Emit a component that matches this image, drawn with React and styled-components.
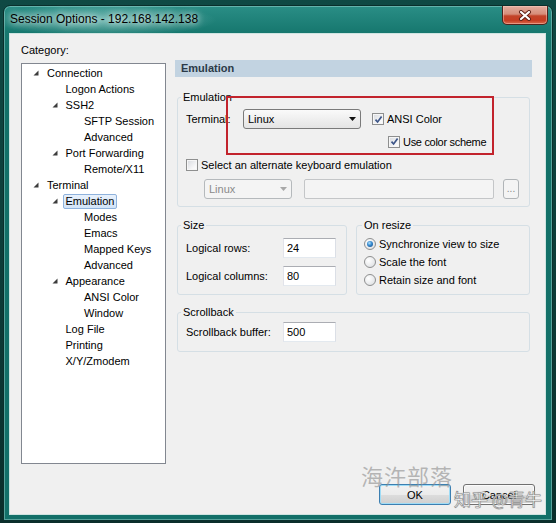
import React from "react";
import styled, { createGlobalStyle } from "styled-components";

const GlobalStyle = createGlobalStyle`
  html, body {
    margin: 0;
    padding: 0;
    background: #0f3f3b;
  }
  body {
    font-family: "Liberation Sans", Arial, sans-serif;
    font-size: 11px;
    color: #000;
  }
  * {
    box-sizing: border-box;
  }
`;

const tree = [
  { label: "Connection", level: 0, open: true },
  { label: "Logon Actions", level: 1 },
  { label: "SSH2", level: 1, open: true },
  { label: "SFTP Session", level: 2 },
  { label: "Advanced", level: 2 },
  { label: "Port Forwarding", level: 1, open: true },
  { label: "Remote/X11", level: 2 },
  { label: "Terminal", level: 0, open: true },
  { label: "Emulation", level: 1, open: true, selected: true },
  { label: "Modes", level: 2 },
  { label: "Emacs", level: 2 },
  { label: "Mapped Keys", level: 2 },
  { label: "Advanced", level: 2 },
  { label: "Appearance", level: 1, open: true },
  { label: "ANSI Color", level: 2 },
  { label: "Window", level: 2 },
  { label: "Log File", level: 1 },
  { label: "Printing", level: 1 },
  { label: "X/Y/Zmodem", level: 1 },
];

const Arrow = () => (
  <svg width="6" height="6" viewBox="0 0 6 6">
    <polygon points="5.5,0.5 5.5,5.5 0.5,5.5" fill="#3c3c3c" />
  </svg>
);

const DropArrow = ({ disabled }) => (
  <svg width="7" height="4" viewBox="0 0 7 4">
    <polygon points="0,0 7,0 3.5,4" fill={disabled ? "#a8a8a8" : "#111"} />
  </svg>
);

const Check = () => (
  <svg width="9" height="9" viewBox="0 0 9 9">
    <path d="M1.5 4.6 L3.6 7 L7.6 1.6" stroke="#3d5688" strokeWidth="1.7" fill="none" />
  </svg>
);

const Session = () => (
  <Desktop>
    <GlobalStyle />
    <Window>
      <TitleBar>
        <Title>Session Options - 192.168.142.138</Title>
        <CloseButton>
          <svg width="14" height="11" viewBox="0 0 14 11">
            <path d="M3 2 L11 9 M11 2 L3 9" stroke="#5a1d14" strokeWidth="4" strokeLinecap="round" />
            <path d="M3 2 L11 9 M11 2 L3 9" stroke="#fff" strokeWidth="2.2" strokeLinecap="round" />
          </svg>
        </CloseButton>
      </TitleBar>
      <Client>
        <Main>
          <LeftColumn>
            <Caption>Category:</Caption>
            <Tree>
              {tree.map((item, i) => (
                <TreeRow key={i} level={item.level}>
                  <ArrowSlot>{item.open && <Arrow />}</ArrowSlot>
                  <TreeLabel selected={item.selected}>{item.label}</TreeLabel>
                </TreeRow>
              ))}
            </Tree>
          </LeftColumn>
          <RightColumn>
            <Header>Emulation</Header>
            <GroupBox top={13} pad="5px 8px 7px 8px">
              <Legend>Emulation</Legend>
              <Row>
                <FieldLabel w={57}>Terminal:</FieldLabel>
                <Select w={118}>
                  Linux
                  <DropArrow />
                </Select>
                <CheckItem gap={11}>
                  <CheckBox checked>
                    <Check />
                  </CheckBox>
                  ANSI Color
                </CheckItem>
              </Row>
              <Row h={13} mt={6} pl={202}>
                <CheckItem tight>
                  <CheckBox checked>
                    <Check />
                  </CheckBox>
                  Use color scheme
                </CheckItem>
              </Row>
              <Row h={13} mt={10}>
                <CheckItem>
                  <CheckBox />
                  Select an alternate keyboard emulation
                </CheckItem>
              </Row>
              <Row mt={8} pl={18}>
                <Select w={88} disabled>
                  Linux
                  <DropArrow disabled />
                </Select>
                <TextBox w={190} ml={12} disabled />
                <SmallButton>...</SmallButton>
              </Row>
            </GroupBox>
            <Pair>
              <GroupBox top={11} pad="6px 8px 8px 8px">
                <Legend>Size</Legend>
                <Row>
                  <FieldLabel w={97}>Logical rows:</FieldLabel>
                  <TextBox w={53}>24</TextBox>
                </Row>
                <Row mt={8}>
                  <FieldLabel w={97}>Logical columns:</FieldLabel>
                  <TextBox w={53}>80</TextBox>
                </Row>
              </GroupBox>
              <GroupBox top={11} pad="3px 7px 5px 7px">
                <Legend shift={-2}>On resize</Legend>
                {["Synchronize view to size", "Scale the font", "Retain size and font"].map(
                  (text, i) => (
                    <Row h={18} key={text}>
                      <RadioItem>
                        <Radio checked={i === 0} />
                        {text}
                      </RadioItem>
                    </Row>
                  )
                )}
              </GroupBox>
            </Pair>
            <GroupBox top={10} pad="3px 8px 9px 8px">
              <Legend>Scrollback</Legend>
              <Row>
                <FieldLabel w={97}>Scrollback buffer:</FieldLabel>
                <TextBox w={53}>500</TextBox>
              </Row>
            </GroupBox>
          </RightColumn>
        </Main>
        <Buttons>
          <PushButton isDefault>OK</PushButton>
          <PushButton>Cancel</PushButton>
        </Buttons>
        <Highlight />
        <WatermarkGrey>海汻部落</WatermarkGrey>
        <WatermarkWhite>知乎 @青牛</WatermarkWhite>
      </Client>
    </Window>
  </Desktop>
);

const Desktop = styled.div`
  width: 556px;
  height: 523px;
  padding: 5px 3px 2px 3px;
  overflow: hidden;
  background: linear-gradient(180deg, #0f4944, #0c3a36 60%, #0a2e2b);
`;

const Window = styled.div`
  height: 100%;
  display: flex;
  flex-direction: column;
  padding: 0 6px 5px 5px;
  border: 1px solid #0a2f2c;
  border-radius: 7px 7px 0 0;
  background: radial-gradient(ellipse 150px 22px at 100px 14px, rgba(190, 235, 230, 0.55), transparent 75%),
    linear-gradient(180deg, #2a8e86 0px, #17786f 26px, #127168 60px, #137069 100%);
  box-shadow: inset 0 0 0 1px rgba(170, 225, 218, 0.45);
`;

const TitleBar = styled.div`
  height: 27px;
  flex: none;
  display: flex;
  align-items: flex-start;
  justify-content: space-between;
  padding-left: 1px;
  margin-right: -2px;
`;

const Title = styled.div`
  margin-top: 5px;
  font-size: 12px;
  line-height: 16px;
  color: #000;
  text-shadow: 0 0 6px rgba(255, 255, 255, 0.9), 0 0 10px rgba(255, 255, 255, 0.7);
`;

const CloseButton = styled.div`
  width: 46px;
  height: 19px;
  display: flex;
  align-items: center;
  justify-content: center;
  border: 1px solid #4e231c;
  border-top: none;
  border-radius: 0 0 5px 5px;
  background: linear-gradient(180deg, #e2ad9f 0%, #d68d79 45%, #c2442a 55%, #c63d22 80%, #da6a4e 100%);
  box-shadow: inset 0 0 0 1px rgba(255, 210, 200, 0.45);
`;

const Client = styled.div`
  flex: 1;
  position: relative;
  display: flex;
  flex-direction: column;
  padding: 9px 10px 9px 11px;
  background: #f0f0f0;
  border: 1px solid #cfe4e1;
`;

const Main = styled.div`
  display: grid;
  grid-template-columns: 145px 357px;
  column-gap: 9px;
  align-items: start;
`;

const LeftColumn = styled.div`
  display: flex;
  flex-direction: column;
`;

const Caption = styled.div`
  line-height: 14px;
  margin-bottom: 6px;
`;

const Tree = styled.div`
  height: 401px;
  padding-top: 1px;
  border: 1px solid #828790;
  background: #fff;
`;

const TreeRow = styled.div`
  height: 16px;
  display: flex;
  align-items: center;
  padding-left: ${(p) => 11 + p.level * 18.5}px;
`;

const ArrowSlot = styled.span`
  width: 11px;
  flex: none;
  display: flex;
  align-items: center;
`;

const TreeLabel = styled.span`
  padding: 0 2px;
  line-height: 13px;
  border: 1px solid ${(p) => (p.selected ? "#8fb2dc" : "transparent")};
  border-radius: 2px;
  background: ${(p) => (p.selected ? "linear-gradient(180deg, #e8f1fc, #d2e4f8)" : "none")};
`;

const RightColumn = styled.div`
  margin-top: 17px;
  display: flex;
  flex-direction: column;
`;

const Header = styled.div`
  height: 17px;
  line-height: 17px;
  padding-left: 6px;
  font-weight: bold;
  color: #2b3a48;
  background: #c2d3e1;
`;

const GroupBox = styled.fieldset`
  margin: ${(p) => p.top}px 2px 0 2px;
  padding: ${(p) => p.pad};
  border: 1px solid #d5dfe5;
  border-radius: 3px;
  min-width: 0;
`;

const Legend = styled.legend`
  padding: 0 2px;
  margin-left: ${(p) => (p.shift != null ? p.shift : -5)}px;
  line-height: 14px;
`;

const Pair = styled.div`
  display: grid;
  grid-template-columns: 170px 174px;
  column-gap: 9px;
  margin: 0 2px;

  & > fieldset {
    margin-left: 0;
    margin-right: 0;
  }
`;

const Row = styled.div`
  height: ${(p) => p.h || 20}px;
  margin-top: ${(p) => p.mt || 0}px;
  padding-left: ${(p) => p.pl || 0}px;
  display: flex;
  align-items: center;
  white-space: nowrap;
`;

const FieldLabel = styled.span`
  width: ${(p) => p.w}px;
  flex: none;
`;

const Select = styled.div`
  width: ${(p) => p.w}px;
  height: 20px;
  flex: none;
  display: flex;
  align-items: center;
  justify-content: space-between;
  padding: 0 4px 0 4px;
  border: 1px solid ${(p) => (p.disabled ? "#b5b9bc" : "#7a7a7a")};
  border-radius: 3px;
  color: ${(p) => (p.disabled ? "#8a8a8a" : "#000")};
  background: ${(p) =>
    p.disabled ? "#f4f4f4" : "linear-gradient(180deg, #fafafa, #efefef 50%, #e4e4e4)"};
`;

const TextBox = styled.div`
  width: ${(p) => p.w}px;
  height: 20px;
  flex: none;
  margin-left: ${(p) => p.ml || 0}px;
  padding-left: 3px;
  line-height: 18px;
  border: 1px solid;
  border-color: ${(p) =>
    p.disabled ? "#c4c6c8" : "#abadb3 #dbdfe6 #e3e9ef #e2e3ea"};
  border-radius: ${(p) => (p.disabled ? 2 : 0)}px;
  background: ${(p) => (p.disabled ? "#f4f4f4" : "#fff")};
`;

const SmallButton = styled.div`
  width: 16px;
  height: 20px;
  flex: none;
  margin-left: 9px;
  display: flex;
  align-items: flex-end;
  justify-content: center;
  padding-bottom: 4px;
  font-size: 10px;
  line-height: 10px;
  color: #8a8a8a;
  border: 1px solid #b0b4b7;
  border-radius: 3px;
  background: #f4f4f4;
`;

const CheckItem = styled.label`
  display: flex;
  align-items: center;
  gap: 3px;
  margin-left: ${(p) => p.gap || 0}px;
  letter-spacing: ${(p) => (p.tight ? "-0.3px" : "normal")};
`;

const CheckBox = styled.span`
  width: 12px;
  height: 12px;
  flex: none;
  display: flex;
  align-items: center;
  justify-content: center;
  border: 1px solid #8e8f8f;
  background: linear-gradient(135deg, #d6d9de, #f7f7f8 70%, #fff);
  box-shadow: inset 0 0 0 1px #f6f6f6;
`;

const RadioItem = styled.label`
  display: flex;
  align-items: center;
  gap: 3px;
`;

const Radio = styled.span`
  width: 12px;
  height: 12px;
  flex: none;
  display: flex;
  align-items: center;
  justify-content: center;
  border: 1px solid #8e8f8f;
  border-radius: 50%;
  background: radial-gradient(circle at 35% 35%, #fff, #e4e6e8 70%, #cfd2d6);

  &::after {
    content: "";
    display: ${(p) => (p.checked ? "block" : "none")};
    width: 6px;
    height: 6px;
    border-radius: 50%;
    background: radial-gradient(circle at 40% 35%, #b6e2fb 0, #3c8fd3 40%, #124f8e 90%);
  }
`;

const Buttons = styled.div`
  margin-top: auto;
  display: flex;
  justify-content: flex-end;
  gap: 12px;
`;

const PushButton = styled.div`
  width: 72px;
  height: 21px;
  display: flex;
  align-items: center;
  justify-content: center;
  border: 1px solid ${(p) => (p.isDefault ? "#3c7fb1" : "#707070")};
  border-radius: 3px;
  background: linear-gradient(180deg, #f2f2f2, #ebebeb 50%, #dddddd 50%, #cfcfcf);
  box-shadow: inset 0 0 0 1px ${(p) => (p.isDefault ? "#9fdcf6" : "#fbfbfb")};
`;

const Highlight = styled.div`
  position: absolute;
  left: 216px;
  top: 62px;
  width: 268px;
  height: 59px;
  border: 2px solid #c2232c;
  pointer-events: none;
`;

const WatermarkGrey = styled.div`
  position: absolute;
  left: 351px;
  top: 428px;
  font-family: "Noto Sans CJK SC", sans-serif;
  font-size: 22px;
  line-height: 26px;
  letter-spacing: 1px;
  color: rgba(140, 140, 140, 0.6);
  pointer-events: none;
`;

const WatermarkWhite = styled.div`
  position: absolute;
  left: 444px;
  top: 455px;
  font-family: "Noto Sans CJK SC", sans-serif;
  font-size: 17px;
  line-height: 20px;
  color: #fff;
  -webkit-text-stroke: 0.6px #8a8a8a;
  text-shadow: 0 0 1px rgba(80, 80, 80, 0.6);
  pointer-events: none;
`;

export default Session;
